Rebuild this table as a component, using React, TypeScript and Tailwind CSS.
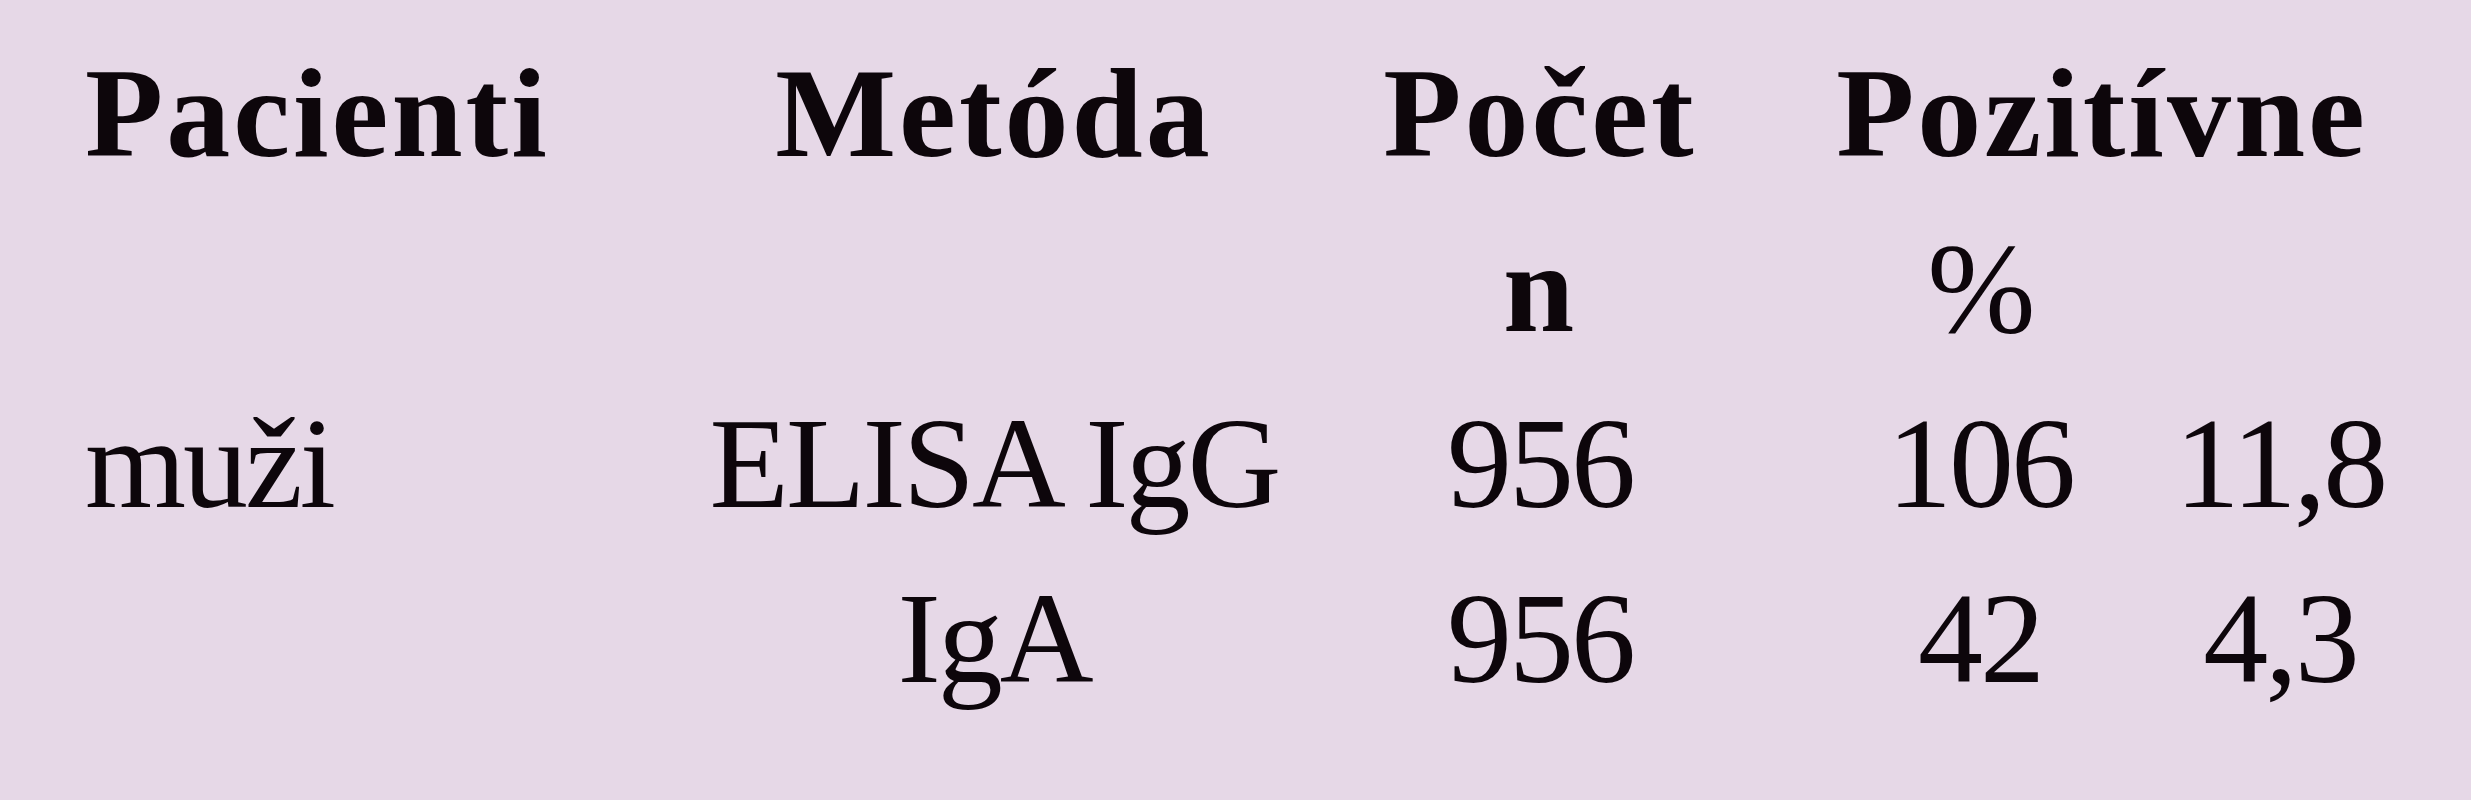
import React from "react";

const serif = "font-['Liberation_Serif','Times_New_Roman',serif]";

export default function App() {
  const head = `${serif} font-bold text-[128px] leading-[175px] tracking-[3px] text-[#0d060b]`;
  const body = `${serif} font-normal text-[130px] leading-[175px] tracking-[-3px] text-[#0d060b]`;
  return (
    <div className="w-full min-h-[800px] bg-[#e6d8e7]">
      <div className="grid grid-cols-[615px_588px_504px_376px_224px] pl-[85px] pt-[26px]">
        {/* header row */}
        <div className={`${head} text-left whitespace-nowrap`}>Pacienti</div>
        <div className={`${head} text-center whitespace-nowrap`}>Metóda</div>
        <div className={`${head} text-center whitespace-nowrap`}>Počet</div>
        <div className={`${head} col-span-2 text-center whitespace-nowrap pl-[20px]`}>Pozitívne</div>

        {/* units row */}
        <div />
        <div />
        <div className={`${head} text-center`}>n</div>
        <div className={`${body} text-center`}>%</div>
        <div />

        {/* muži ELISA IgG */}
        <div className={`${body} text-left whitespace-nowrap`}>muži</div>
        <div className={`${body} text-center whitespace-nowrap`}>ELISA IgG</div>
        <div className={`${body} text-center`}>956</div>
        <div className={`${body} text-center`}>106</div>
        <div className={`${body} text-center`}>11,8</div>

        {/* IgA */}
        <div />
        <div className={`${body} text-center whitespace-nowrap`}>IgA</div>
        <div className={`${body} text-center`}>956</div>
        <div className={`${body} text-center`}>42</div>
        <div className={`${body} text-center`}>4,3</div>
      </div>
    </div>
  );
}
